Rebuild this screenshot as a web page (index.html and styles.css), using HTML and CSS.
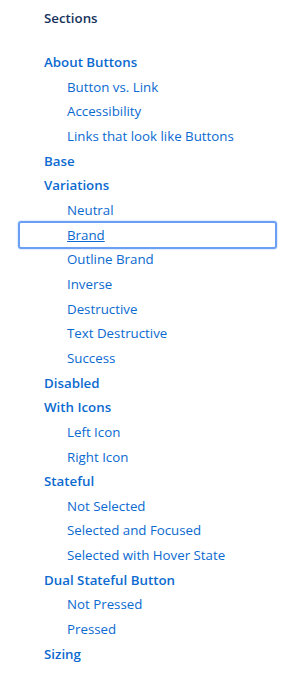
FILE: index.html
```html
<!DOCTYPE html>
<html lang="en">
<head>
  <meta charset="UTF-8" />
  <meta name="viewport" content="width=device-width, initial-scale=1.0"/>
  <title>Buttons – Sections</title>
  <link rel="stylesheet" href="styles.css">
</head>
<body>
  <nav class="toc">
    <h2 class="toc-title">Sections</h2>
    <ul class="toc-list">
      <li class="toc-item"><a href="#about">About Buttons</a></li>
      <li class="toc-sub"><a href="#vs">Button vs. Link</a></li>
      <li class="toc-sub"><a href="#a11y">Accessibility</a></li>
      <li class="toc-sub"><a href="#links">Links that look like Buttons</a></li>
      <li class="toc-item"><a href="#base">Base</a></li>
      <li class="toc-item"><a href="#variations">Variations</a></li>
      <li class="toc-sub"><a href="#neutral">Neutral</a></li>
      <li class="toc-sub focused"><a href="#brand">Brand</a></li>
      <li class="toc-sub"><a href="#outline">Outline Brand</a></li>
      <li class="toc-sub"><a href="#inverse">Inverse</a></li>
      <li class="toc-sub"><a href="#destructive">Destructive</a></li>
      <li class="toc-sub"><a href="#text-destructive">Text Destructive</a></li>
      <li class="toc-sub"><a href="#success">Success</a></li>
      <li class="toc-item"><a href="#disabled">Disabled</a></li>
      <li class="toc-item"><a href="#icons">With Icons</a></li>
      <li class="toc-sub"><a href="#left">Left Icon</a></li>
      <li class="toc-sub"><a href="#right">Right Icon</a></li>
      <li class="toc-item"><a href="#stateful">Stateful</a></li>
      <li class="toc-sub"><a href="#not-selected">Not Selected</a></li>
      <li class="toc-sub"><a href="#selected-focused">Selected and Focused</a></li>
      <li class="toc-sub"><a href="#selected-hover">Selected with Hover State</a></li>
      <li class="toc-item"><a href="#dual">Dual Stateful Button</a></li>
      <li class="toc-sub"><a href="#not-pressed">Not Pressed</a></li>
      <li class="toc-sub"><a href="#pressed">Pressed</a></li>
      <li class="toc-item"><a href="#sizing">Sizing</a></li>
    </ul>
  </nav>
</body>
</html>
```

FILE: styles.css
```css
body {
  margin: 0;
  padding: 0;
  background: #fff;
  font-family: 'Open Sans', sans-serif;
  font-size: 13.3px;
  color: #16325c;
}
.toc {
  padding: 8px 0 0 44px;
  width: 233px;
}
.toc-title {
  margin: 0 0 22px;
  font-size: 13.3px;
  font-weight: 600;
  line-height: 20px;
  color: #16325c;
}
.toc-list {
  list-style: none;
  margin: 0;
  padding: 0;
}
.toc-list li {
  line-height: 24.67px;
  height: 24.67px;
}
.toc-list a {
  color: #0b6ad0;
  text-decoration: none;
}
.toc-item a {
  font-weight: 600;
}
.toc-sub {
  padding-left: 23px;
}
.toc-sub.focused {
  position: relative;
}
.toc-sub.focused::before {
  content: "";
  position: absolute;
  left: -26px;
  right: 0;
  top: -2px;
  bottom: -2px;
  border: 2px solid #6b9ff4;
  border-radius: 3px;
  box-shadow: 0 0 2px #9cc2fb;
}
.toc-sub.focused a {
  text-decoration: underline;
}
```
